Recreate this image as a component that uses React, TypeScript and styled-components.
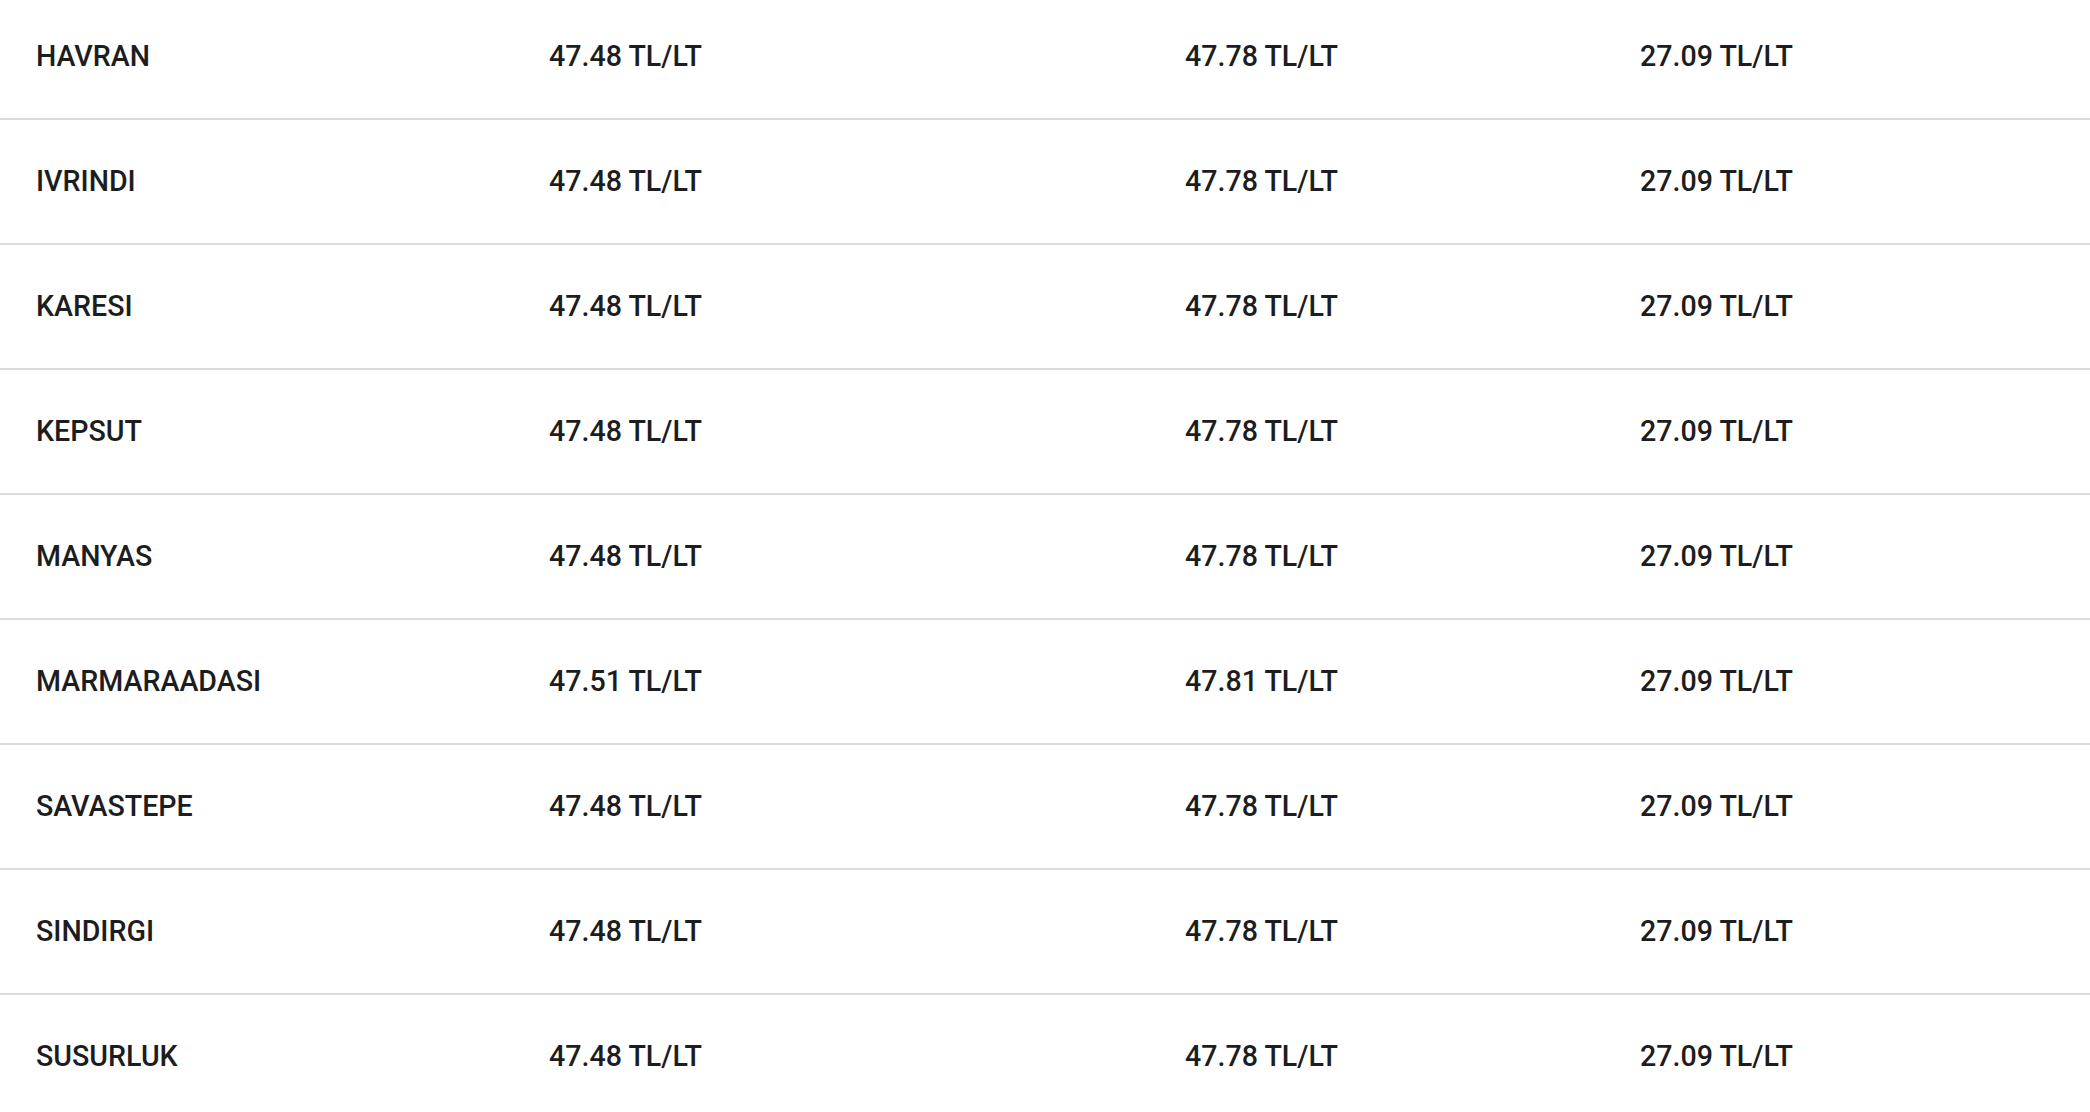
import React from "react";
import styled, { createGlobalStyle } from "styled-components";

const GlobalStyle = createGlobalStyle`
  html, body {
    margin: 0;
    padding: 0;
    background: #ffffff;
    overflow: hidden;
  }
  body {
    font-family: Roboto, "Liberation Sans", Arial, sans-serif;
  }
`;

const Viewport = styled.div`
  width: 2090px;
  height: 1112px;
  overflow: hidden;
  background: #ffffff;
`;

const Table = styled.div`
  display: flex;
  flex-direction: column;
  margin-top: -5px;
`;

const Row = styled.div`
  display: grid;
  grid-template-columns: 513px 636px 455px 1fr;
  align-items: center;
  height: 123px;
  border-bottom: 2px solid #dcdcdc;
`;

const Cell = styled.div`
  padding-left: 36px;
  font-family: Roboto, "Liberation Sans", Arial, sans-serif;
  font-size: 28.6px;
  font-weight: 500;
  color: #1c1d20;
  white-space: nowrap;
  line-height: 1;
`;

type Item = { name: string; a: string; b: string; c: string };

const rows: Item[] = [
  { name: "HAVRAN", a: "47.48", b: "47.78", c: "27.09" },
  { name: "IVRINDI", a: "47.48", b: "47.78", c: "27.09" },
  { name: "KARESI", a: "47.48", b: "47.78", c: "27.09" },
  { name: "KEPSUT", a: "47.48", b: "47.78", c: "27.09" },
  { name: "MANYAS", a: "47.48", b: "47.78", c: "27.09" },
  { name: "MARMARAADASI", a: "47.51", b: "47.81", c: "27.09" },
  { name: "SAVASTEPE", a: "47.48", b: "47.78", c: "27.09" },
  { name: "SINDIRGI", a: "47.48", b: "47.78", c: "27.09" },
  { name: "SUSURLUK", a: "47.48", b: "47.78", c: "27.09" },
];

export default function App() {
  return (
    <>
      <GlobalStyle />
      <Viewport>
        <Table>
          {rows.map((r) => (
            <Row key={r.name}>
              <Cell>{r.name}</Cell>
              <Cell>{r.a} TL/LT</Cell>
              <Cell>{r.b} TL/LT</Cell>
              <Cell>{r.c} TL/LT</Cell>
            </Row>
          ))}
        </Table>
      </Viewport>
    </>
  );
}
